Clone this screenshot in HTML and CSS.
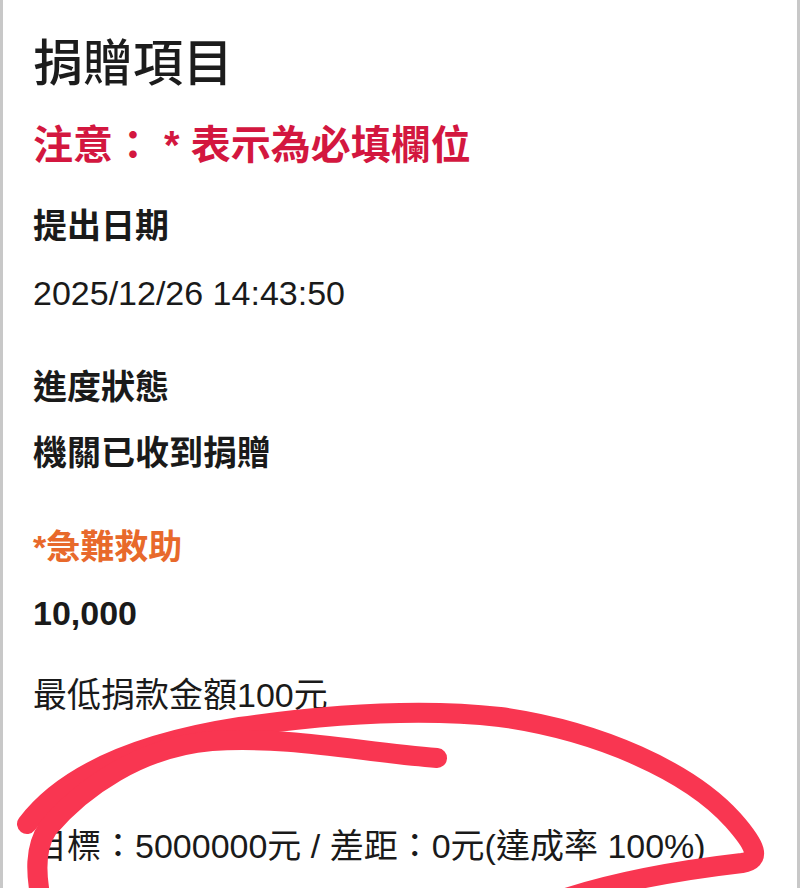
FILE: index.html
```html
<!DOCTYPE html>
<html lang="zh-Hant">
<head>
<meta charset="utf-8">
<title>捐贈項目</title>
<link rel="stylesheet" href="styles.css">
</head>
<body>
<div class="page">
  <h1 class="title">捐贈項目</h1>
  <p class="notice">注意： * 表示為必填欄位</p>
  <section class="field">
    <div class="label">提出日期</div>
    <div class="value date">2025/12/26 14:43:50</div>
  </section>
  <section class="field">
    <div class="label">進度狀態</div>
    <div class="value strong">機關已收到捐贈</div>
  </section>
  <section class="field">
    <div class="label required">*急難救助</div>
    <div class="value strong">10,000</div>
    <div class="value hint">最低捐款金額100元</div>
    <div class="value goal">目標：5000000元 / 差距：0元(達成率 100%)</div>
  </section>
  <svg class="annotation" viewBox="0 0 800 888" width="800" height="888" aria-hidden="true">
    <path d="M 27 824 C 62 778, 130 744, 240 727 C 330 714, 420 708, 500 717 C 600 731, 690 772, 733 820 C 756 846, 762 860, 742 863 C 690 869, 620 880, 560 900" />
    <path d="M 437 758 C 360 752, 290 736, 212 741 C 140 747, 82 788, 48 828 C 34 848, 36 875, 41 900" />
  </svg>
</div>
</body>
</html>
```
FILE: styles.css
```css
html, body {
  margin: 0;
  padding: 0;
  background: #ffffff;
}

body {
  font-family: "Liberation Sans", "Noto Sans CJK TC", sans-serif;
  color: #1a1a1a;
}

.page {
  position: relative;
  box-sizing: border-box;
  width: 800px;
  height: 888px;
  overflow: hidden;
  border-left: 3px solid #c8c8c8;
  border-right: 3px solid #c8c8c8;
  padding: 29px 0 0 30px;
}

.title {
  margin: 0;
  font-size: 50px;
  line-height: 70px;
  font-weight: 500;
  color: #1c1c1c;
}

.notice {
  margin: 16px 0 0;
  font-size: 40px;
  line-height: 60px;
  font-weight: 700;
  color: #d3173f;
}

.field {
  margin-top: 18px;
}

.field + .field {
  margin-top: 28px;
}

.label,
.value {
  font-size: 34px;
  line-height: 66px;
}

.label {
  font-weight: 700;
}

.label.required {
  color: #e8692b;
}

.value {
  font-weight: 400;
}

.value.date {
  margin-top: 1px;
}

.value.strong {
  font-weight: 700;
}

.value.hint {
  margin-top: 16px;
}

.value.goal {
  margin-top: 85px;
}

.annotation {
  position: absolute;
  left: -3px;
  top: 0;
  pointer-events: none;
}

.annotation path {
  fill: none;
  stroke: #f93651;
  stroke-width: 20;
  stroke-linecap: round;
  stroke-linejoin: round;
}
```
